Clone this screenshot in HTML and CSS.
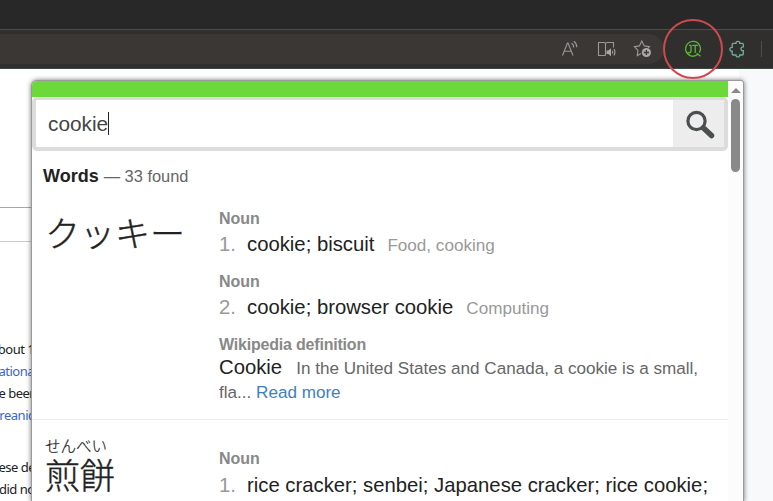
FILE: index.html
```html
<!DOCTYPE html>
<html lang="en">
<head>
<meta charset="utf-8">
<title>Cookie</title>
<link rel="stylesheet" href="styles.css">
</head>
<body>
<div class="titlebar"></div>
<header class="toolbar">
  <div class="address">
    <svg class="read-aloud" width="18" height="18" viewBox="0 0 18 18"><path d="M1.500 15.500 6.500 3h.5l5 12.500M3.400 11.200h6.700M10.500 3q2.200 1.600 2.200 4.500M12.800 1.300q3 2.200 3 6"/></svg>
    <svg class="reader" width="20" height="18" viewBox="0 0 20 18"><path d="M8.500 15.500h-7V2.500h5.500q1.500 0 1.500 1.500v11.500M8.500 4q0-1.500 1.500-1.500h6.500v5"/><path class="solid" d="M9.500 10.500h1.800l2.700-2.300v8L11.300 14H9.500z"/><path d="M15.300 10.700q.8 1.500 0 3M17 9q2 3.200 0 6.500"/></svg>
    <svg class="favorite" width="20" height="20" viewBox="0 0 20 20"><path d="M8 14.400 4.200 16.600l.8-5.200L1.400 7.700l5-.8L8.800 2.100l2.400 4.800 5.200.8-1.400 1.400"/><circle class="solid" cx="13.400" cy="13.500" r="4.600"/><path class="plus" d="M10.800 13.500H16M13.400 10.900v5.200"/></svg>
  </div>
  <svg class="jt" width="18" height="18" viewBox="0 0 18 18"><path d="M13.600 14.600A7.400 7.400 0 1 1 15.300 12.700M12.600 13.200l4 3"/><path class="letters" d="M7 5.300v5.500q0 2-1.800 2-1.200 0-1.700-.7M5 5.400h2M8.200 5.400h6M11.200 5.400V13"/></svg>
  <svg class="puzzle" width="17" height="18" viewBox="0 0 17 18"><path d="M4.200 3.300H7C6.700.6 11 .6 10.700 3.300h2.600q1 0 1 1v2.600c-3.100-.5-3.100 4.300 0 3.800V14q0 1-1 1h-2.600c.3 2.500-4 2.500-3.700 0H4.200q-1 0-1-1v-2.800c-3.100.4-3.100-4.200 0-3.800V4.300q0-1 1-1z"/></svg>
  <div class="divider"></div>
</header>
<main class="page">
  <div class="article">
    <div class="bar"></div>
    <p><span>about 1</span><a>national</a><span>be been</span><a class="l4">oreanic</a></p>
    <p><span>nese de</span><span class="l6">did not</span></p>
  </div>
</main>

<section class="popup">
  <div class="content">
    <div class="accent"></div>
    <div class="search">
      <div class="query">cookie<i class="caret"></i></div>
      <div class="button"><svg width="32" height="32" viewBox="0 0 32 32"><circle cx="12.500" cy="12" r="8.600"/><path d="m19.500 19 8 7.500"/></svg></div>
    </div>
    <h1>Words <span>— 33 found</span></h1>
    <article class="entry">
      <div class="term" lang="ja">クッキー</div>
      <div class="meanings">
        <h2>Noun</h2>
        <div class="meaning"><span class="num">1.</span>cookie; biscuit<span class="tag">Food, cooking</span></div>
        <h2>Noun</h2>
        <div class="meaning"><span class="num">2.</span>cookie; browser cookie<span class="tag">Computing</span></div>
        <h2 class="tight">Wikipedia definition</h2>
        <div class="wiki"><b>Cookie</b>In the United States and Canada, a cookie is a small,<br>fla... <a>Read more</a></div>
      </div>
    </article>
    <article class="entry second">
      <div class="term" lang="ja"><div class="reading">せんべい</div><div class="kanji">煎餅</div></div>
      <div class="meanings">
        <h2>Noun</h2>
        <div class="meaning"><span class="num">1.</span>rice cracker; senbei; Japanese cracker; rice cookie;</div>
      </div>
    </article>
  </div>
  <div class="scrollbar"><div class="arrow"></div><div class="thumb"></div></div>
</section>
<div class="highlight"></div>
</body>
</html>
```
FILE: styles.css
```css
* { box-sizing: border-box; }
body { margin: 0; width: 773px; height: 501px; overflow: hidden; position: relative; background: #fff; font-family: "Liberation Sans", Arial, sans-serif; }
.titlebar { height: 29px; background: #282828; }
.toolbar { height: 40px; display: flex; align-items: center; background: #302f2e; border-top: 1px solid #4a4e4b; border-bottom: 1px solid #3d4744; }
.address { width: 664px; height: 30px; display: flex; align-items: center; padding-left: 561px; background: #3b3735; border-radius: 0 15px 15px 0; }
svg { fill: none; stroke: #9b9896; stroke-width: 1.1; flex: none; }
svg .solid { fill: #aaa8a6; stroke: none; }
svg .plus { stroke: #3b3735; stroke-width: 1.3; }
.reader { margin-left: 18px; }
.favorite { margin-left: 16px; }
.jt { margin-left: 20px; stroke: #58b832; stroke-width: 1.3; }
.puzzle { margin-left: 27px; stroke: #6fafa0; stroke-width: 1.3; }
.divider { margin-left: 15px; width: 1px; height: 16px; background: #4c504d; }

.page { height: 432px; background: linear-gradient(to right, #fff 739px, #f8f9fb 739px); }
.article { width: 34px; height: 432px; overflow: hidden; padding-top: 138px; font: 13px/22px "Noto Sans", sans-serif; letter-spacing: -0.5px; color: #202122; }
.bar { height: 35px; border-top: 1px solid #a2a9b1; border-bottom: 1px solid #c8ccd1; margin-bottom: 96px; }
.article p { margin: 0 0 30px; display: flex; flex-direction: column; white-space: nowrap; }
.article p:last-child { margin: 0; }
.article p > * { margin-left: -9px; }
.article a { color: #3a66c8; }
.article p > .l4 { margin-left: -8px; }
.article p > .l6 { margin-left: -1px; }

.popup { position: absolute; left: 32px; top: 81px; width: 711px; height: 420px; display: flex; background: #fff; border-radius: 5px 3px 0 0; box-shadow: 0 0 0 1px #9a9a9a, 0 0 5px 1px rgba(0,0,0,.55); overflow: hidden; }
.content { width: 696px; }
.accent { height: 16px; background: #6ad939; }
.search { height: 54px; display: flex; border: 4px solid #dcdcdc; border-top-width: 3px; border-radius: 5px; }
.query { flex: 1; display: flex; align-items: center; padding: 0 0 0 12px; font-size: 20.8px; color: #444; }
.caret { width: 1px; height: 23px; background: #222; }
.button { width: 51px; display: flex; align-items: center; justify-content: center; padding: 3px 0 0 2px; background: #ededed; }
.button svg { stroke: #4b4f50; stroke-width: 3.2; }
.button path { stroke-width: 5.5; stroke-linecap: round; }
h1 { margin: 14px 0 0 11px; font-size: 18px; line-height: 22px; color: #222; }
h1 span { font-size: 16.4px; font-weight: 400; color: #666; }
.entry { display: flex; padding-top: 22px; height: 232px; }
.term { width: 187px; padding-left: 13px; font: 300 35px/46px "Noto Sans CJK JP", sans-serif; -webkit-text-stroke: 0.4px #222; color: #222; }
.meanings { flex: 1; white-space: nowrap; }
h2 { margin: 0; font-size: 16px; line-height: 20px; color: #888; }
.tight { letter-spacing: -0.2px; }
.meaning { font-size: 20.3px; line-height: 30px; height: 43px; color: #222; }
.num { display: inline-block; width: 28px; color: #999; }
.tag { margin-left: 13px; font-size: 17.1px; color: #999; }
.wiki { font-size: 17.1px; line-height: 24px; color: #666; }
.wiki b { font-size: 20.3px; font-weight: 400; color: #222; margin-right: 14px; }
.wiki a { color: #4080c0; }
.second { height: 82px; border-top: 1px solid #ebebeb; padding-top: 29px; }
.second .term { margin-top: -15px; }
.reading { font-size: 15.5px; line-height: 22px; -webkit-text-stroke-width: 0.2px; }
.kanji { line-height: 35px; }
.second .meaning { height: 33px; line-height: 33px; }
.scrollbar { width: 15px; background: #fcfcfc; display: flex; flex-direction: column; align-items: center; }
.arrow { margin-top: 7px; border: 5px solid transparent; border-top: 0; border-bottom-color: #888; }
.thumb { margin-top: 6px; width: 9px; height: 73px; border-radius: 5px; background: #898989; }
.highlight { position: absolute; left: 663px; top: 19px; width: 60px; height: 60px; border: 2px solid #ce4a4f; border-radius: 50%; }
```
